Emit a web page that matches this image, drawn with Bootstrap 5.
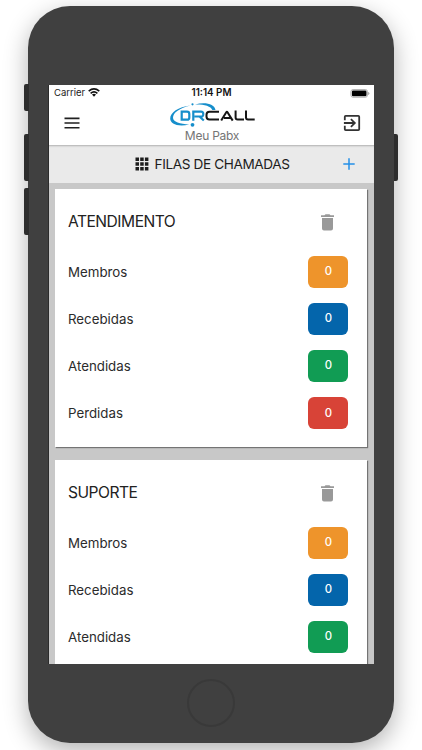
<!DOCTYPE html>
<html lang="pt-BR">
<head>
<meta charset="utf-8">
<meta name="viewport" content="width=device-width, initial-scale=1">
<title>Meu Pabx</title>
<link href="https://cdn.jsdelivr.net/npm/bootstrap@5.3.0/dist/css/bootstrap.min.css" rel="stylesheet">
<style>
body{font-family:Inter,"Liberation Sans",sans-serif;background:#fff;height:750px;color:#222;line-height:1.2}
.phone{width:366px;height:736.5px;margin:6px 0 0 28px;padding:79px 20px 0 21px;background:#404040;border-radius:42px;box-shadow:0 8px 24px rgba(0,0,0,.3)}
.side-key{position:absolute;width:5px;background:#2d2d2d;z-index:0}
.key-l{left:-4.5px;border-radius:2px 0 0 2px}
.key-r{right:-4px;width:4px;border-radius:0 2px 2px 0}
.k1{top:78px;height:27px}.k2{top:128px;height:47px}.k3{top:182px;height:47px}
.screen{width:325px;height:579px;background:#c8c8c8;box-shadow:-1px 0 #2c2c2c}
.status{height:16px;font-size:9.5px;padding:0 4px 0 5px;color:#222}
.status>*{flex:1 1 0}
.status-left{gap:3px}
.clock{font-weight:600;color:#111;font-size:9.8px;padding-right:1px}
.appbar{height:44px;padding:0 13px 0 15px}
.brand{height:44px}
.subtitle{font-size:12px;letter-spacing:-.25px;color:#757575;line-height:15px;padding-left:1px}
.titlebar{height:38px;background:#eaeaea;box-shadow:inset 0 2px 2px -1px rgba(0,0,0,.25);font-size:13.6px;letter-spacing:-.38px;padding:0 18px 0 86px;color:#1d1d1d}
.title-text{padding-left:5.5px}
.queues{padding:6px 7px 0 6px}
.queue{height:258px;margin-bottom:13px;padding:8px 18.6px 0 13px;box-shadow:1px 1px 1px rgba(0,0,0,.42)}
.queue-head{height:51px;font-size:15.6px;letter-spacing:-.5px;padding-right:14px}
.queue-rows{padding-top:.5px}
.queue-row{height:47.1px;font-size:13.3px;color:#2b2b2b}
.queue-row>span:first-child{padding-top:1px}
.count{width:40px;height:32px;border-radius:6px;color:#fff;font-size:11.3px;font-weight:500}
.c-orange{background:#ee942b}.c-blue{background:#0465ab}.c-green{background:#119c54}.c-red{background:#d84337}
.home{width:48px;height:48px;border:2px solid #393939;margin:15px auto 0 138px}
</style>
<script src="https://cdn.jsdelivr.net/npm/bootstrap@5.3.0/dist/js/bootstrap.bundle.min.js"></script>
</head>
<body class="overflow-hidden d-flex align-items-start">
<div class="phone position-relative flex-shrink-0">
  <span class="side-key key-l k1"></span><span class="side-key key-l k2"></span><span class="side-key key-l k3"></span><span class="side-key key-r k2"></span>
  <main class="screen overflow-hidden">
    <header class="bg-white">
      <div class="status d-flex align-items-center">
        <div class="status-left d-flex align-items-center"><span>Carrier</span>
          <svg width="12" height="9" viewBox="0 0 12 9" fill="none" stroke="#111" stroke-width="1.6"><path d="M.7 3.2Q6-1.3 11.3 3.2M2.6 5.3Q6 2.5 9.4 5.3"/><path d="M4 6.6Q6 5.1 8 6.6L6 8.8Z" fill="#111" stroke="none"/></svg>
        </div>
        <div class="clock text-center">11:14 PM</div>
        <div class="d-flex justify-content-end"><svg width="20" height="9" viewBox="0 0 20 9"><rect x=".9" y=".5" width="16.6" height="7.8" rx="2.2" fill="#fff" stroke="#a3a3a3" stroke-width=".8"/><rect x="1.9" y="1.5" width="14.6" height="5.8" rx="1.2"/><path d="M18.3 3v3q1-.4 1-1.5T18.3 3" fill="#888"/></svg></div>
      </div>
      <div class="appbar d-flex align-items-center justify-content-between">
        <svg width="16" height="12" viewBox="0 0 16 12" stroke="#202020" stroke-width="1.6"><path d="M.5 1.4h15M.5 6h15M.5 10.7h15"/></svg>
        <div class="brand d-flex flex-column align-items-center">
          <svg width="88" height="27" viewBox="0 0 88 27" fill="none" role="img" aria-label="DRCALL">
            <path d="M22.500 4.500C10 6 2.200 11.500 2.200 17.500c0 5.500 7.500 8.500 19 6C12 23 5 21 5 16.800 5 11.800 11.500 7 22.500 4.500Z" fill="#168ecb"/>
            <path d="M27 3.400C38 .8 46.500 3.200 47.500 9H44.300C43 4.900 36 3.200 27 3.400Z" fill="#168ecb"/>
            <circle cx="24.500" cy="3.300" r="1.100" fill="#168ecb"/><circle cx="24.500" cy="23.800" r="1.900" fill="#168ecb"/>
            <path d="M13.700 10.700H19q2.300 0 2.300 2.300V16.400q0 2.300-2.300 2.300H13.700ZM25.300 19.800V10.700H33q2.300 0 2.300 2.400t-2.300 2.400H26.500M31.500 15.500L35.800 19.500" stroke="#168ecb" stroke-width="2.200"/>
            <path d="M51 10.700H41.500q-3 0-3 3V15.600q0 3 3 3H51M53.200 19.600L58.300 11.200q.6-1 1.200 0L64.700 19.600M56 17h7M67.600 9.600V16.600q0 2 2 2H76M78 9.600V16.600q0 2 2 2H86.700" stroke="#161616" stroke-width="2"/>
          </svg>
          <div class="subtitle">Meu Pabx</div>
        </div>
        <svg width="18" height="18" viewBox="2 2 20 20" fill="#333"><path d="M10.090 15.590 11.500 17l5-5-5-5-1.410 1.410L12.670 11H3v2h9.670zM19 3H5a2 2 0 0 0-2 2v4h2V5h14v14H5v-4H3v4a2 2 0 0 0 2 2h14a2 2 0 0 0 2-2V5a2 2 0 0 0-2-2z"/></svg>
      </div>
    </header>
    <div class="titlebar d-flex align-items-center">
      <svg width="14" height="14" viewBox="0 0 14 14" fill="#1d1d1d"><path d="M.5 .6h3.500v3.500H.5zM5.200 .6h3.500v3.500H5.200zM9.900 .6h3.500v3.500H9.900zM.5 5.200h3.500v3.500H.5zM5.200 5.200h3.500v3.500H5.200zM9.900 5.200h3.500v3.500H9.900zM.5 9.900h3.500v3.500H.5zM5.200 9.900h3.500v3.500H5.200zM9.900 9.900h3.500v3.500H9.900z"/></svg>
      <span class="text-nowrap title-text">FILAS DE CHAMADAS</span>
      <svg class="ms-auto" width="14" height="14" viewBox="0 0 14 14" stroke="#2590e8" stroke-width="1.500"><path d="M7 1.300v11.400M1.300 7h11.400"/></svg>
    </div>
    <div class="queues">
      <section class="queue bg-white">
        <div class="queue-head d-flex align-items-center justify-content-between"><span>ATENDIMENTO</span><svg width="13" height="17" viewBox="0 0 13 17" fill="#999"><path d="M0 1.300h3.500L4.500.300h4l1 1H13V2.900H0zM1 4h11v10.500q0 2-2 2H3q-2 0-2-2z"/></svg></div>
        <div class="queue-rows">
          <div class="queue-row d-flex align-items-center justify-content-between"><span>Membros</span><span class="count c-orange d-flex align-items-center justify-content-center">0</span></div>
          <div class="queue-row d-flex align-items-center justify-content-between"><span>Recebidas</span><span class="count c-blue d-flex align-items-center justify-content-center">0</span></div>
          <div class="queue-row d-flex align-items-center justify-content-between"><span>Atendidas</span><span class="count c-green d-flex align-items-center justify-content-center">0</span></div>
          <div class="queue-row d-flex align-items-center justify-content-between"><span>Perdidas</span><span class="count c-red d-flex align-items-center justify-content-center">0</span></div>
        </div>
      </section>
      <section class="queue bg-white">
        <div class="queue-head d-flex align-items-center justify-content-between"><span>SUPORTE</span><svg width="13" height="17" viewBox="0 0 13 17" fill="#999"><path d="M0 1.300h3.500L4.500.300h4l1 1H13V2.900H0zM1 4h11v10.500q0 2-2 2H3q-2 0-2-2z"/></svg></div>
        <div class="queue-rows">
          <div class="queue-row d-flex align-items-center justify-content-between"><span>Membros</span><span class="count c-orange d-flex align-items-center justify-content-center">0</span></div>
          <div class="queue-row d-flex align-items-center justify-content-between"><span>Recebidas</span><span class="count c-blue d-flex align-items-center justify-content-center">0</span></div>
          <div class="queue-row d-flex align-items-center justify-content-between"><span>Atendidas</span><span class="count c-green d-flex align-items-center justify-content-center">0</span></div>
        </div>
      </section>
    </div>
  </main>
  <div class="home rounded-circle"></div>
</div>
</body>
</html>
